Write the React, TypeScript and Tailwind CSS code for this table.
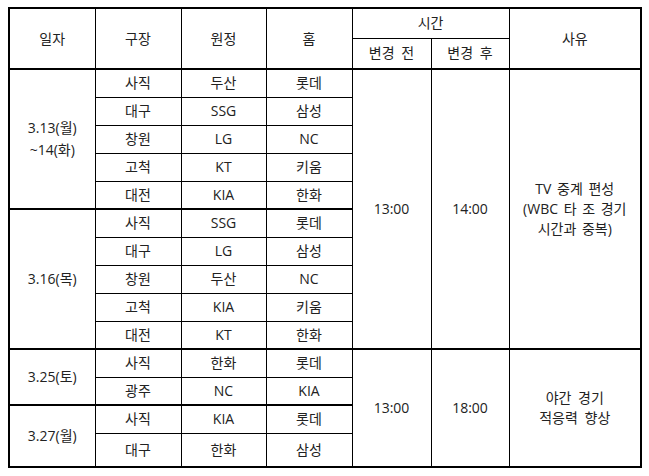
import React from "react";

const font = { fontFamily: '"Open Sans", "Noto Sans CJK KR", sans-serif' };

type Row = { park: string; away: string; home: string };

const group1: Row[] = [
  { park: "사직", away: "두산", home: "롯데" },
  { park: "대구", away: "SSG", home: "삼성" },
  { park: "창원", away: "LG", home: "NC" },
  { park: "고척", away: "KT", home: "키움" },
  { park: "대전", away: "KIA", home: "한화" },
];
const group2: Row[] = [
  { park: "사직", away: "SSG", home: "롯데" },
  { park: "대구", away: "LG", home: "삼성" },
  { park: "창원", away: "두산", home: "NC" },
  { park: "고척", away: "KIA", home: "키움" },
  { park: "대전", away: "KT", home: "한화" },
];

const td = "border border-black text-center align-middle p-0";

export default function App() {
  return (
    <div className="bg-white w-[649px] h-[476px] overflow-hidden pt-[7px] pl-[8px]" style={font}>
      <table className="table-fixed border-collapse border-2 border-black text-[14px] leading-[20px] text-[#222] w-[632px]">
        <colgroup>
          <col className="w-[86px]" />
          <col className="w-[86px]" />
          <col className="w-[85px]" />
          <col className="w-[86px]" />
          <col className="w-[79px]" />
          <col className="w-[78px]" />
          <col className="w-[132px]" />
        </colgroup>
        <thead>
          <tr className="h-[30px]">
            <th rowSpan={2} className={`${td} font-normal border-b-2`}>일자</th>
            <th rowSpan={2} className={`${td} font-normal border-b-2`}>구장</th>
            <th rowSpan={2} className={`${td} font-normal border-b-2`}>원정</th>
            <th rowSpan={2} className={`${td} font-normal border-b-2`}>홈</th>
            <th colSpan={2} className={`${td} font-normal`}>시간</th>
            <th rowSpan={2} className={`${td} font-normal border-b-2`}>사유</th>
          </tr>
          <tr className="h-[31px]">
            <th className={`${td} font-normal border-b-2 [word-spacing:3px]`}>변경 전</th>
            <th className={`${td} font-normal border-b-2 [word-spacing:3px]`}>변경 후</th>
          </tr>
        </thead>
        <tbody>
          {group1.map((r, i) => (
            <tr key={"a" + i} className="h-[28px]">
              {i === 0 && (
                <td rowSpan={5} className={`${td} border-b-2 leading-[22px]`}>
                  3.13(월)
                  <br />~14(화)
                </td>
              )}
              <td className={`${td} ${i === 4 ? "border-b-2" : ""}`}>{r.park}</td>
              <td className={`${td} ${i === 4 ? "border-b-2" : ""}`}>{r.away}</td>
              <td className={`${td} ${i === 4 ? "border-b-2" : ""}`}>{r.home}</td>
              {i === 0 && (
                <>
                  <td rowSpan={10} className={td}>13:00</td>
                  <td rowSpan={10} className={td}>14:00</td>
                  <td rowSpan={10} className={`${td} [word-spacing:2px]`}>
                    TV 중계 편성
                    <br />(WBC 타 조 경기
                    <br />시간과 중복)
                  </td>
                </>
              )}
            </tr>
          ))}
          {group2.map((r, i) => (
            <tr key={"b" + i} className="h-[28px]">
              {i === 0 && (
                <td rowSpan={5} className={`${td} border-b-2`}>3.16(목)</td>
              )}
              <td className={td}>{r.park}</td>
              <td className={td}>{r.away}</td>
              <td className={td}>{r.home}</td>
            </tr>
          ))}
          <tr className="h-[28px] border-t-2 border-black">
            <td rowSpan={2} className={`${td} border-t-2 border-b-2`}>3.25(토)</td>
            <td className={`${td} border-t-2`}>사직</td>
            <td className={`${td} border-t-2`}>한화</td>
            <td className={`${td} border-t-2`}>롯데</td>
            <td rowSpan={4} className={`${td} border-t-2`}>13:00</td>
            <td rowSpan={4} className={`${td} border-t-2`}>18:00</td>
            <td rowSpan={4} className={`${td} border-t-2 [word-spacing:3px]`}>
              야간 경기
              <br />적응력 향상
            </td>
          </tr>
          <tr className="h-[28px]">
            <td className={`${td} border-b-2`}>광주</td>
            <td className={`${td} border-b-2`}>NC</td>
            <td className={`${td} border-b-2`}>KIA</td>
          </tr>
          <tr className="h-[28px]">
            <td rowSpan={2} className={td}>3.27(월)</td>
            <td className={td}>사직</td>
            <td className={td}>KIA</td>
            <td className={td}>롯데</td>
          </tr>
          <tr className="h-[34px]">
            <td className={td}>대구</td>
            <td className={td}>한화</td>
            <td className={td}>삼성</td>
          </tr>
        </tbody>
      </table>
    </div>
  );
}
